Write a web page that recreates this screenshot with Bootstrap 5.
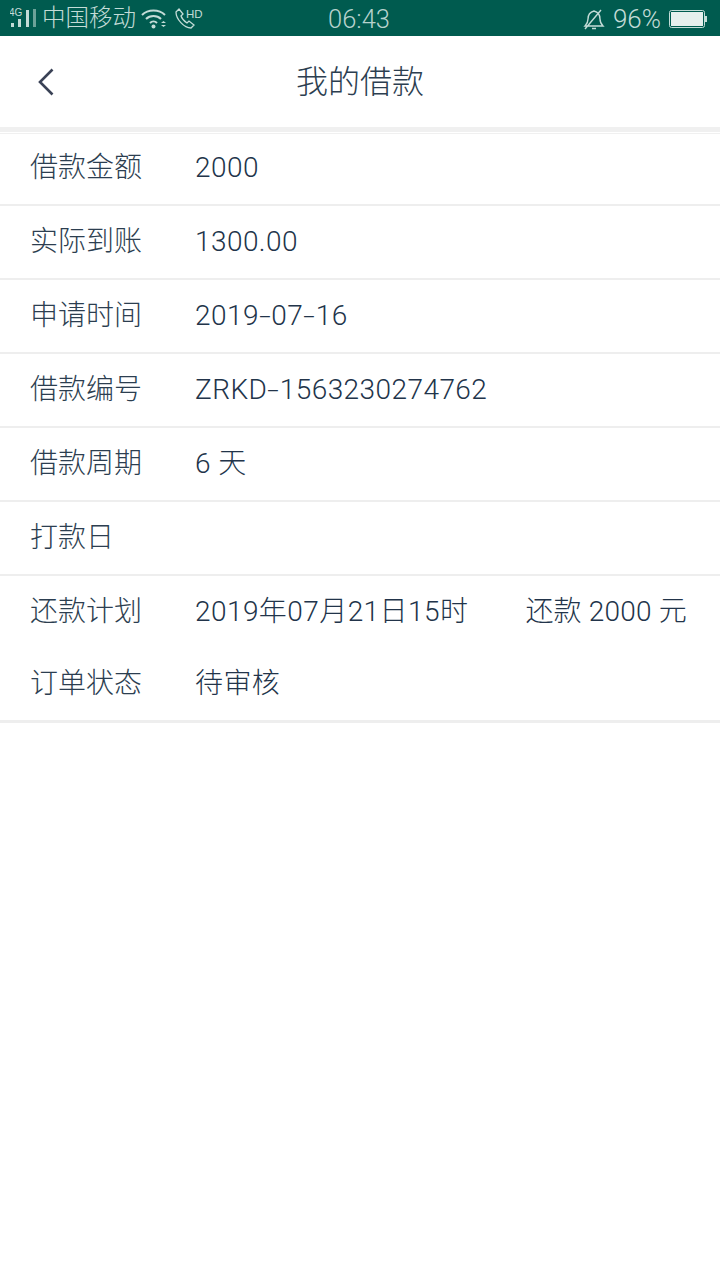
<!DOCTYPE html>
<html lang="zh">
<head>
<meta charset="utf-8">
<link href="https://cdn.jsdelivr.net/npm/bootstrap@5.3.0/dist/css/bootstrap.min.css" rel="stylesheet">
<style>
body{background:#fff;font-family:"Roboto","Noto Sans CJK SC",sans-serif;font-weight:300;color:#34495e;}
.sbar{height:36px;background:#005b4f;color:#c3dcd7;font-size:24px;padding:2px 13px 0 10px;}
.sbar svg{display:block;flex:none}
.sbar-left,.sbar-right{width:270px}
.sbar-time{font-size:25.500px;color:#b6d2cd;margin-top:1px;margin-left:1px}
.pct{font-size:26px}
.carrier{margin-left:6px;margin-right:5px;margin-top:-1px;font-size:23.500px}
.hdr{height:96px;border-bottom:5px solid #f0f0f0;}
.hdr-title{font-size:32px;color:#2c3e50;line-height:1;margin-top:1px}
.hdr-back{left:37px;top:32px}
.gapline{height:1px;background:#f0f0f0;margin-top:1px}
.rowi{height:74px;border-bottom:2px solid #eeeeee;font-size:28px;padding-left:30px;align-items:center}
.rowi.first{height:72px;padding-bottom:2px}
.rowi.pln{border-bottom:0;height:70px;padding-top:2px}
.rowi.pln2{height:77px;border-bottom:3px solid #eeeeee;padding-top:2px}
.lbl{width:165px;flex:none;color:#2c3e50}
.val{color:#22344a;letter-spacing:.43px}
.val.amt{margin-left:auto;margin-right:33px;letter-spacing:.2px}
.hy{display:inline-block;padding:0 2px;transform:scaleX(1.500)}
</style>
</head>
<body>
<div class="sbar d-flex justify-content-between align-items-center">
  <div class="sbar-left d-flex align-items-center">
    <svg width="26" height="22" viewBox="0 0 26 22" fill="#c3dcd7"><text x="-1" y="8" font-size="10" font-family="Liberation Sans" fill="#c3dcd7">4G</text><rect x="1" y="15" width="3" height="4"/><rect x="8" y="11" width="3" height="8"/><rect x="16" y="2" width="3" height="17"/><rect x="23" y="1" width="3" height="18" opacity=".55"/></svg>
    <span class="carrier">中国移动</span>
    <svg width="26" height="20" viewBox="0 0 26 20" fill="none" stroke="#c3dcd7" stroke-width="2"><path d="M1 6C7 0 18 0 24 6M5 10c4-4 11-4 15 0M9 14c2-2 5-2 7 0"/><circle cx="12.500" cy="17.500" r="2" fill="#c3dcd7" stroke="none"/><path d="M20 14l2.500-2 2.500 2zM20 16l2.500 2 2.500-2z" fill="#c3dcd7" stroke="none"/></svg>
    <svg class="ms-2" width="30" height="24" viewBox="0 0 30 24" fill="none" stroke="#c3dcd7" stroke-width="1.300"><path d="M1 5l3-3 4 5-2 2c1 3 3 5 6 7l2-2 5 4-3 3C9 21 1 12 1 5z"/><text x="11" y="11" font-size="11.500" font-family="Liberation Sans" fill="#c3dcd7" stroke="none">HD</text></svg>
  </div>
  <div class="sbar-time">06:43</div>
  <div class="sbar-right d-flex align-items-center justify-content-end">
    <svg class="me-2" width="22" height="22" viewBox="0 0 22 22" fill="none" stroke="#c3dcd7" stroke-width="1.400"><path d="M2 18h18c-2-2-3-4-3-7 0-4-2-7-6-8-4 1-6 4-6 8 0 3-1 5-3 7zM9 20.500h4M2 21L18 2"/></svg>
    <span class="pct">96%</span>
    <svg class="ms-2" width="38" height="18" viewBox="0 0 38 18"><rect x=".5" y=".5" width="35" height="17" rx="2" fill="none" stroke="#c3dcd7"/><rect x="2" y="2" width="32" height="14" fill="#e6efed"/><rect x="36" y="6" width="2" height="6" fill="#c3dcd7"/></svg>
  </div>
</div>
<div class="hdr position-relative d-flex align-items-center justify-content-center">
  <svg class="hdr-back position-absolute" width="18" height="28" viewBox="0 0 18 28" fill="none" stroke="#3a4256" stroke-width="2.600"><path d="M15.500 1.500L3 14l12.500 12.500"/></svg>
  <div class="hdr-title">我的借款</div>
</div>
<div class="gapline"></div>
<div class="rowi first d-flex"><span class="lbl">借款金额</span><span class="val">2000</span></div>
<div class="rowi d-flex"><span class="lbl">实际到账</span><span class="val">1300.00</span></div>
<div class="rowi d-flex"><span class="lbl">申请时间</span><span class="val">2019<span class="hy">-</span>07<span class="hy">-</span>16</span></div>
<div class="rowi d-flex"><span class="lbl">借款编号</span><span class="val">ZRKD<span class="hy">-</span>1563230274762</span></div>
<div class="rowi d-flex"><span class="lbl">借款周期</span><span class="val">6 天</span></div>
<div class="rowi d-flex"><span class="lbl">打款日</span></div>
<div class="rowi pln d-flex"><span class="lbl">还款计划</span><span class="val">2019年07月21日15时</span><span class="val amt">还款 2000 元</span></div>
<div class="rowi pln2 d-flex"><span class="lbl">订单状态</span><span class="val">待审核</span></div>
<script src="https://cdn.jsdelivr.net/npm/bootstrap@5.3.0/dist/js/bootstrap.bundle.min.js"></script>
</body>
</html>
